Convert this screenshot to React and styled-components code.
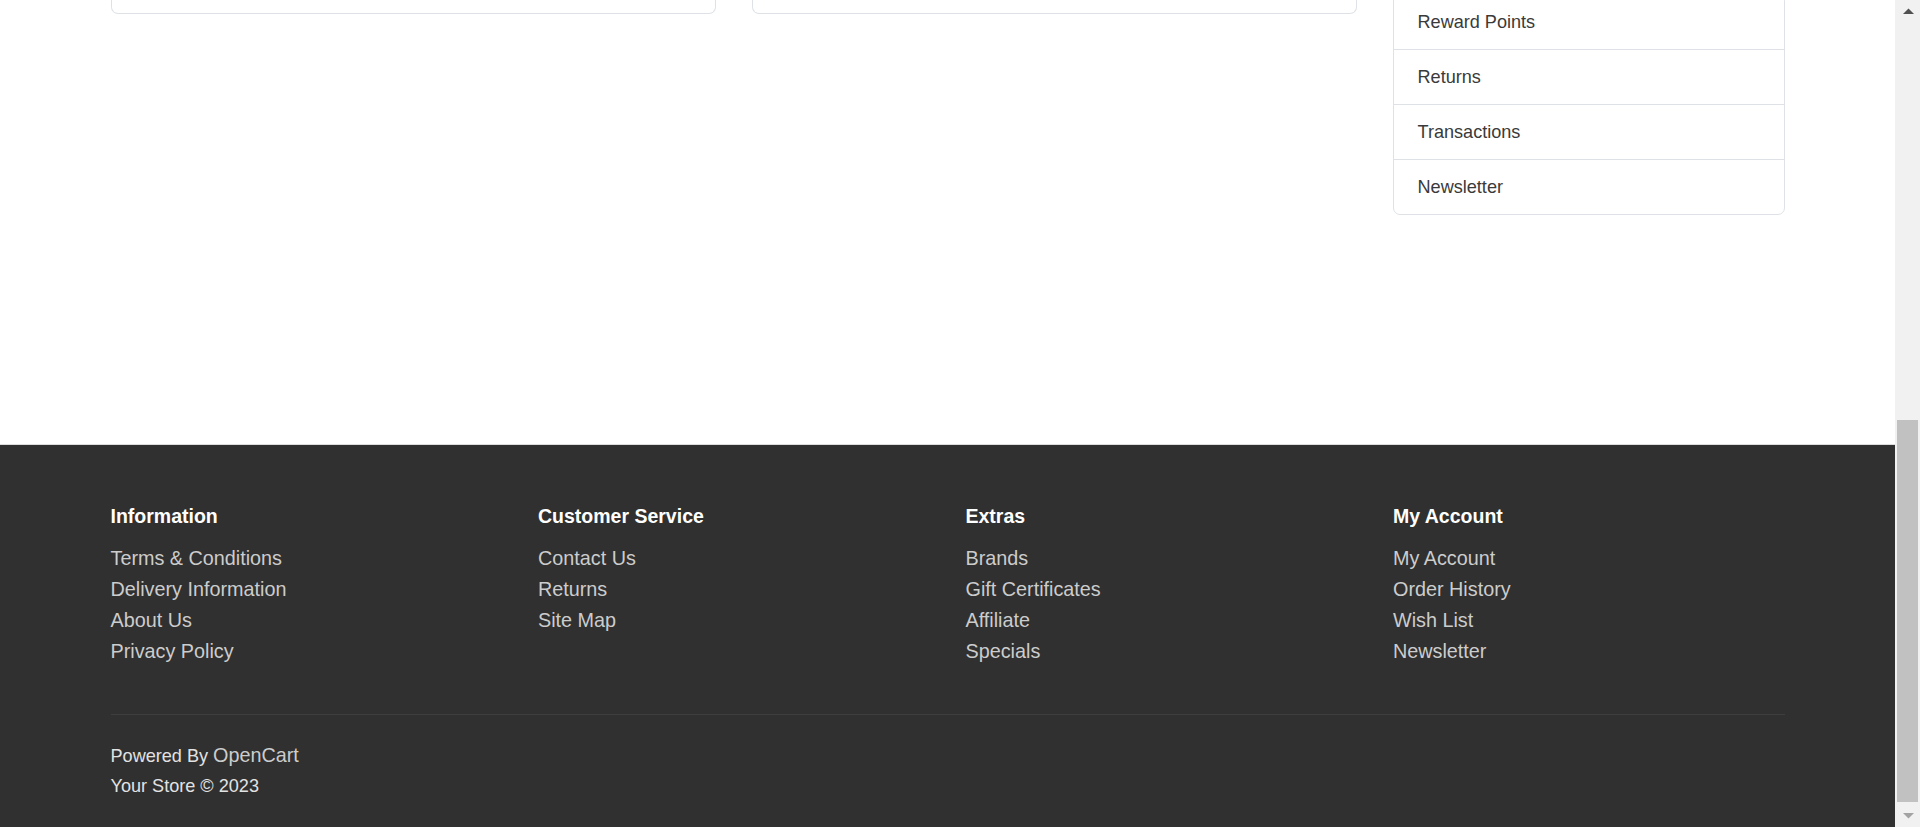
import React from "react";
import styled, { createGlobalStyle } from "styled-components";

const Global = createGlobalStyle`
  html, body { margin: 0; padding: 0; overflow: hidden; }
  body {
    font-family: "Liberation Sans", Arial, Helvetica, sans-serif;
    background: #fff;
  }
  * { box-sizing: border-box; }
`;

const Screen = styled.div`
  display: flex;
  width: 1920px;
  height: 827px;
  overflow: hidden;
`;

const Page = styled.div`
  flex: 0 0 1895px;
  display: flex;
  flex-direction: column;
  overflow: hidden;
  background: #fff;
`;

const Content = styled.main`
  padding-bottom: 229px;
`;

const Container = styled.div`
  width: 1674px;
  margin: 0 auto;
`;

const Row = styled.div`
  display: grid;
  grid-template-columns: 1246px 392px;
  column-gap: 36px;
  align-items: start;
  margin-top: ${(p) => p.$scroll}px;
`;

const MainCol = styled.div`
  display: grid;
  grid-template-columns: 1fr 1fr;
  column-gap: 36px;
`;

const Card = styled.div`
  height: 20px;
  background: #fff;
  border: 1px solid #dee2e6;
  border-top: 0;
  border-radius: 0 0 7px 7px;
`;

const ListGroup = styled.div`
  border: 1px solid #dee2e6;
  border-radius: 7px;
  overflow: hidden;
  background: #fff;
`;

const ListItem = styled.a`
  display: flex;
  align-items: center;
  box-sizing: content-box;
  height: 54px;
  padding: 0 24px;
  font-size: 18.1px;
  line-height: 27px;
  color: #3a3a3a;
  text-decoration: none;
  & + & {
    border-top: 1px solid #dee2e6;
  }
`;

const Footer = styled.footer`
  flex: 1;
  background: #303030;
  border-top: 1px solid #ddd;
  color: #e2e2e2;
  padding-top: 60px;
`;

const FooterGrid = styled.div`
  display: grid;
  grid-template-columns: repeat(4, 1fr);
  column-gap: 36px;
`;

const Heading = styled.h5`
  margin: 0 0 15px;
  font-size: 19.5px;
  line-height: 23.4px;
  font-weight: bold;
  color: #fff;
`;

const LinkList = styled.ul`
  list-style: none;
  margin: 0;
  padding: 0;
`;

const LinkItem = styled.li`
  font-size: 19.8px;
  line-height: 31px;
  a {
    color: #ccc;
    text-decoration: none;
  }
`;

const Divider = styled.hr`
  border: 0;
  border-top: 1px solid #3e3e3e;
  margin: 47px 0 26px;
`;

const Credit = styled.p`
  margin: 0;
  font-size: 18.1px;
  line-height: 29.4px;
  color: #e2e2e2;
`;

const CreditLink = styled.a`
  font-size: 19.8px;
  color: #ccc;
  text-decoration: none;
`;

const Scrollbar = styled.div`
  flex: 0 0 25px;
  display: flex;
  flex-direction: column;
  background: #f1f1f1;
`;

const ArrowBtn = styled.div`
  height: 22px;
  display: flex;
  align-items: center;
  justify-content: center;
  padding-left: 1px;
`;

const Track = styled.div`
  flex: 1;
  display: flex;
  flex-direction: column;
  justify-content: flex-end;
  padding: 0 2px 3px;
`;

const Thumb = styled.div`
  height: 382px;
  background: #c1c1c1;
`;

const Arrow = ({ dir, color }) => (
  <svg width="11" height="6" viewBox="0 0 11 6">
    {dir === "up" ? (
      <polygon points="0,6 5.5,0.5 11,6" fill={color} />
    ) : (
      <polygon points="0,0 5.5,5.5 11,0" fill={color} />
    )}
  </svg>
);

const sidebarItems = ["Reward Points", "Returns", "Transactions", "Newsletter"];

const footerColumns = [
  {
    title: "Information",
    links: ["Terms & Conditions", "Delivery Information", "About Us", "Privacy Policy"],
  },
  { title: "Customer Service", links: ["Contact Us", "Returns", "Site Map"] },
  { title: "Extras", links: ["Brands", "Gift Certificates", "Affiliate", "Specials"] },
  { title: "My Account", links: ["My Account", "Order History", "Wish List", "Newsletter"] },
];

export default function App() {
  return (
    <>
      <Global />
      <Screen>
        <Page>
          <Content>
            <Container>
              <Row $scroll={-6}>
                <MainCol>
                  <Card />
                  <Card />
                </MainCol>
                <ListGroup>
                  {sidebarItems.map((item) => (
                    <ListItem key={item} href="#">
                      {item}
                    </ListItem>
                  ))}
                </ListGroup>
              </Row>
            </Container>
          </Content>
          <Footer>
            <Container>
              <FooterGrid>
                {footerColumns.map((col) => (
                  <div key={col.title}>
                    <Heading>{col.title}</Heading>
                    <LinkList>
                      {col.links.map((l) => (
                        <LinkItem key={l}>
                          <a href="#">{l}</a>
                        </LinkItem>
                      ))}
                    </LinkList>
                  </div>
                ))}
              </FooterGrid>
              <Divider />
              <Credit>
                Powered By <CreditLink href="#">OpenCart</CreditLink>
              </Credit>
              <Credit>Your Store © 2023</Credit>
            </Container>
          </Footer>
        </Page>
        <Scrollbar>
          <ArrowBtn>
            <Arrow dir="up" color="#505050" />
          </ArrowBtn>
          <Track>
            <Thumb />
          </Track>
          <ArrowBtn>
            <Arrow dir="down" color="#a3a3a3" />
          </ArrowBtn>
        </Scrollbar>
      </Screen>
    </>
  );
}
